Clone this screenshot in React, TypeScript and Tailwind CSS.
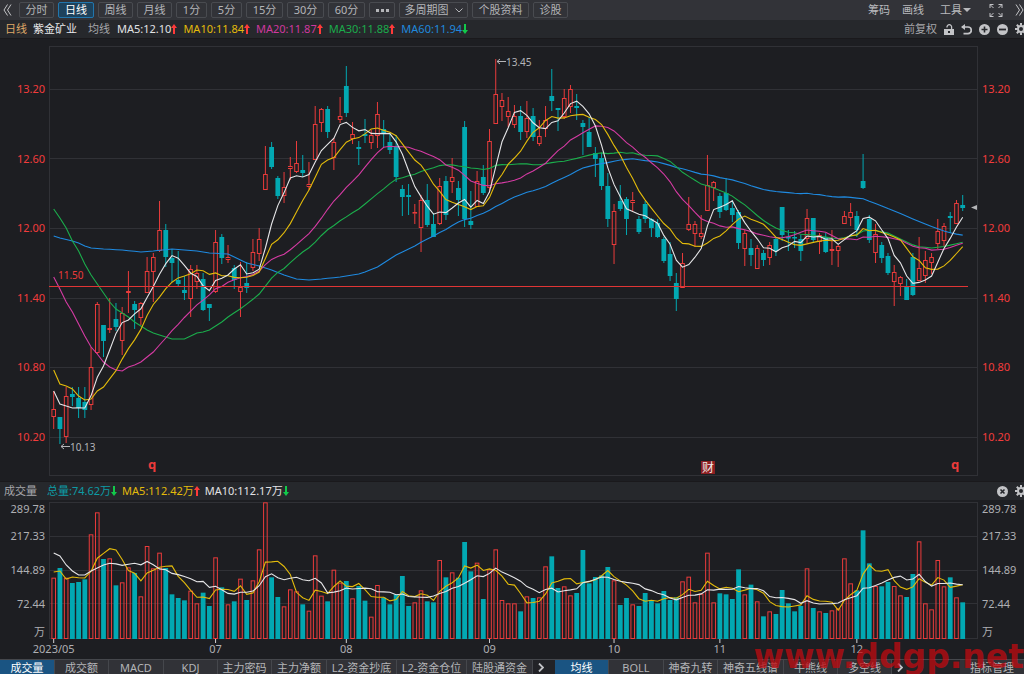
import React from "react";

const FONT = "font-['Noto_Sans','Noto_Sans_CJK_SC',sans-serif]";

// kind, high, open/close top, open/close bottom, low (all on the plot's y scale)
type Candle = [string, number, number, number, number];

const CANDLES: Candle[] = `
r 391 409 417 429;c 417 417 429 444;r 387 396 437 443;c 387 394 397 406;c 387 398 408 418;c 387 402 410 418;r 347 367 405 410;r 302 304 353 354;c 325 325 341 357;r 298 328 330 333;
c 303 319 327 331;r 307 313 341 355;r 271 291 293 313;c 301 304 310 329;r 302 303 318 325;r 257 271 293 293;r 253 257 272 302;r 201 230 251 252;c 224 230 257 267;c 249 258 263 282;
c 251 280 284 286;c 276 290 293 300;r 265 269 299 317;r 265 273 282 289;c 273 279 310 311;c 304 304 308 321;r 230 242 292 293;c 234 237 258 264;r 245 257 260 263;c 265 268 280 289;
r 262 287 292 317;c 262 283 288 293;r 239 252 268 271;r 228 239 254 261;r 146 174 190 190;c 142 147 167 169;c 176 178 196 199;r 172 187 196 203;r 157 166 169 180;r 141 163 172 173;
c 155 170 173 177;r 162 184 187 190;r 106 124 160 160;r 108 109 123 132;c 106 109 132 138;r 138 142 158 170;r 97 116 120 123;c 66 86 113 117;r 122 134 139 144;c 141 147 149 165;
c 119 134 136 143;r 130 135 143 149;r 102 114 136 148;c 120 129 133 147;c 132 142 150 154;c 135 146 177 182;c 185 189 197 216;c 184 195 197 215;r 204 212 213 224;r 195 200 228 252;
c 184 200 225 227;c 213 224 237 237;r 178 186 224 225;c 176 181 215 220;r 158 177 182 193;c 181 188 200 216;c 121 127 219 227;c 191 221 225 229;r 171 181 207 207;c 165 177 193 195;
r 129 141 188 193;r 59 94 124 124;r 93 100 107 121;r 97 111 117 127;r 105 116 125 128;c 106 116 132 140;r 101 118 132 138;c 108 116 137 141;r 120 136 144 146;r 106 120 129 137;
c 69 96 101 111;c 108 108 110 131;r 89 98 117 119;r 85 89 107 113;c 94 106 108 120;c 120 123 127 155;c 117 132 147 147;c 147 153 159 177;c 153 158 186 190;c 173 186 219 227;
r 204 211 245 264;c 185 201 209 211;c 197 199 219 235;r 192 200 203 212;c 216 219 232 234;c 201 204 219 223;c 218 219 228 237;c 219 223 237 238;c 237 239 261 263;c 242 254 276 281;
c 273 283 299 311;r 253 263 288 288;r 197 224 230 231;r 221 224 234 247;r 215 233 237 239;r 155 185 211 211;r 181 182 188 201;c 193 196 212 218;c 178 193 210 211;c 200 208 215 222;
c 210 212 243 249;r 230 233 249 266;c 239 248 255 266;r 245 248 269 269;c 250 253 260 266;r 242 245 258 265;c 237 239 251 256;c 207 207 235 241;c 230 237 238 251;c 231 237 238 248;
c 235 239 251 261;r 209 218 239 243;c 218 218 240 242;r 233 235 242 254;c 233 237 252 253;r 230 249 251 265;r 245 246 251 267;r 211 216 224 224;r 203 212 218 226;c 211 216 230 237;
c 154 181 188 189;c 215 219 240 243;r 224 234 253 263;c 242 245 258 263;c 253 256 273 275;r 265 272 282 306;r 276 277 284 296;c 279 287 300 300;c 253 257 295 296;r 237 268 281 281;
r 251 260 276 283;r 253 257 263 274;r 219 231 244 249;r 223 226 241 246;c 212 216 218 233;r 200 203 224 224;c 195 205 208 211`
  .split(";")
  .map((s) => {
    const p = s.trim().split(" ");
    return [p[0], +p[1], +p[2], +p[3], +p[4]];
  });

// bar tops, in thirds of a unit below y = 480
const VOLUMES = (
  "293 264 293 309 306 298 163 97 237 235 316 307 262 279 349 198 265 218 264 343 354 361 332 370 338 378 232 322 373 364 " +
  "296 360 301 208 67 292 351 379 328 334 373 392 226 347 364 269 308 303 355 318 362 410 315 353 373 343 288 378 367 331 " +
  "364 367 240 292 277 293 186 274 248 357 268 208 360 370 370 394 349 354 352 259 229 324 319 346 339 210 310 291 286 261 " +
  "301 375 354 373 378 339 360 370 333 360 352 304 290 367 341 218 367 340 343 357 268 343 314 364 409 394 402 330 370 394 " +
  "378 265 384 394 399 391 385 235 310 331 151 250 318 319 306 318 346 351 282 184 370 388 240 319 292 352 367"
)
  .split(" ")
  .map((v) => 480 + Number(v) / 3);

const CLOSES = CANDLES.map((c) => (c[0] === "r" ? c[2] : c[3]));
const xAt = (i: number) => 53.7 + i * 6.226;

type Key = [number, number];

// The first points of an average come from days before the visible range.
function average(values: number[], period: number, lead: Key[]): string {
  return values
    .map((_, i) => {
      let y: number;
      if (i >= period - 1) {
        y = values.slice(i - period + 1, i + 1).reduce((a, b) => a + b, 0) / period;
      } else {
        const k = Math.max(1, lead.findIndex((p) => p[0] >= i));
        const [a, b] = [lead[k - 1], lead[k]];
        y = a[1] + ((b[1] - a[1]) * (i - a[0])) / (b[0] - a[0]);
      }
      return `${xAt(i).toFixed(1)},${y.toFixed(1)}`;
    })
    .join(" ");
}

const seq = (...ys: number[]): Key[] => ys.map((y, i) => [i, y]);

const PRICE_LINES: [string, string][] = [
  ["#1f8ae0", average(CLOSES, 60, [[0, 236], [1, 238], [3, 241], [4, 243], [5, 246], [6, 248], [8, 249], [11, 250], [14, 252], [16, 251], [19, 249], [23, 251], [25, 253], [28, 254], [29, 257], [31, 263], [33, 266], [35, 270], [37, 275], [39, 279], [41, 280], [43, 279], [46, 277], [49, 274], [50, 272], [52, 267], [53, 263], [55, 255], [58, 246], [59, 243]])],
  ["#1bae4c", average(CLOSES, 30, seq(209, 218, 228, 241, 251, 264, 275, 284, 293, 302, 309, 313, 317, 322, 326, 330, 333, 335, 337, 339, 339, 339, 336, 333, 332, 330, 326, 322, 317, 312))],
  ["#d63ba4", average(CLOSES, 20, seq(277, 289, 302, 312, 324, 336, 347, 354, 362, 367, 370, 371, 367, 365, 362, 357, 352, 345, 338, 330))],
  ["#e3bb0b", average(CLOSES, 10, seq(370, 384, 386, 389, 396, 400, 399, 391, 387, 379))],
  ["#e6e6e8", average(CLOSES, 5, seq(391, 404, 406, 408, 408))],
];

const VOLUME_LINES: [string, string][] = [
  ["#e3bb0b", average(VOLUMES, 5, seq(572, 571, 579, 577, 578))],
  ["#e6e6e8", average(VOLUMES, 10, seq(553, 556, 565, 571, 575, 575, 571, 568, 565, 562))],
];

const MONTHS: [number, string][] = [[0, "2023/05"], [26, "07"], [47, "08"], [70, "09"], [90, "10"], [107, "11"], [129, "12"]];

const RED = "#ea3b3b";
const CYAN = "#02a8b2";
const GRID = "#303136";

function Arrow({ up }: { up: boolean }) {
  return (
    <svg width="6" height="10" viewBox="0 0 6 10" fill={up ? "#ff3a3a" : "#12c94a"} className="shrink-0">
      <path d={up ? "M3 0 6 4H4V10H2V4H0Z" : "M3 10 6 6H4V0H2V6H0Z"} />
    </svg>
  );
}

function Reading({ text, up, tone }: { text: string; up: boolean; tone: string }) {
  return (
    <span className={`flex items-center ${tone}`}>
      {text}
      <Arrow up={up} />
    </span>
  );
}

function Gear() {
  return (
    <svg width="12" height="12" viewBox="0 0 12 12" fill="none" stroke="currentColor">
      <circle cx="6" cy="6" r="3" strokeWidth="2" />
      <path d="M6 0V2.5M6 9.500V12M0 6H2.500M9.500 6H12M1.800 1.800 3.500 3.500M8.500 8.500 10.200 10.200M10.200 1.800 8.500 3.500M3.500 8.500 1.800 10.200" strokeWidth="2" />
    </svg>
  );
}

function IconButton({ label, children, className = "" }: { label: string; children: React.ReactNode; className?: string }) {
  return (
    <button aria-label={label} className={`flex shrink-0 items-center justify-center text-[#c3c4c7] ${className}`}>
      {children}
    </button>
  );
}

const PERIODS: [string, string][] = [
  ["分时", "w-[35px]"],
  ["日线", "w-[36px]"],
  ["周线", "w-[35px]"],
  ["月线", "w-[35px]"],
  ["1分", "w-[31px]"],
  ["5分", "w-[31px]"],
  ["15分", "w-[37px]"],
  ["30分", "w-[37px]"],
  ["60分", "w-[37px]"],
];

const BTN = "flex h-4 shrink-0 items-center justify-center rounded-xs border";
const IDLE = "border-[#494b50] text-[#b4b5b8]";

function Toolbar() {
  return (
    <div className="flex h-5 items-center bg-[#323338] text-[#b9babd]">
      <IconButton label="收起" className="w-[19px] pr-1">
        <svg width="9" height="12" viewBox="0 0 9 12" fill="none" stroke="currentColor">
          <path d="M4.500 .5 1 6l3.500 5.500M8 .5 4.500 6 8 11.500" />
        </svg>
      </IconButton>
      <nav className="flex gap-1">
        {PERIODS.map(([t, w]) => (
          <button key={t} className={`${BTN} ${w} ${t === "日线" ? "border-[#2176ad] bg-[#1d425c] text-white" : IDLE}`}>
            {t}
          </button>
        ))}
        <button aria-label="更多" className={`${BTN} w-[26px] gap-0.5 ${IDLE}`}>
          <i className="size-[3px] bg-[#b4b5b8]" />
          <i className="size-[3px] bg-[#b4b5b8]" />
          <i className="size-[3px] bg-[#b4b5b8]" />
        </button>
        <button className={`${BTN} w-[69px] gap-1.5 ${IDLE}`}>
          多周期图
          <svg width="8" height="5" viewBox="0 0 8 5" fill="none" stroke="currentColor">
            <path d="M.5 .5 4 4 7.500 .5" />
          </svg>
        </button>
        <button className={`${BTN} w-[57px] ${IDLE}`}>个股资料</button>
        <button className={`${BTN} w-[35px] ${IDLE}`}>诊股</button>
      </nav>
      <div className="ml-auto flex items-center">
        <button className="mr-3">筹码</button>
        <button className="mr-4">画线</button>
        <button className="mr-[18px] flex items-center gap-px">
          工具
          <svg width="8" height="4" viewBox="0 0 8 4" fill="currentColor">
            <path d="M0 0H8L4 4Z" />
          </svg>
        </button>
        <IconButton label="全屏" className="mr-3">
          <svg width="14" height="13" viewBox="0 0 14 13" fill="none" stroke="currentColor">
            <path d="M1 4V.5H4.500M1 .5 4.500 4M9.500 .5H13V4M13 .5 9.500 4M1 9V12.500H4.500M1 12.500 4.500 9M13 9V12.500H9.500M13 12.500 9.500 9" />
          </svg>
        </IconButton>
        <IconButton label="展开">
          <svg width="9" height="12" viewBox="0 0 9 12" fill="none" stroke="currentColor">
            <path d="M1 .5 4.500 6 1 11.500M4.500 .5 8 6 4.500 11.500" />
          </svg>
        </IconButton>
      </div>
    </div>
  );
}

function Legend() {
  return (
    <div className="flex h-[19px] items-center overflow-hidden border-b border-[#1a191c] bg-[#26282c] pl-[5px]">
      <span className="mr-1.5 text-[#dfa968]">日线</span>
      <span className="mr-[11px] text-[#e8e8ea]">紫金矿业</span>
      <span className="mr-[7px] text-[#a6a7ab]">均线</span>
      <div className="flex gap-1.5">
        <Reading text="MA5:12.10" up tone="text-[#e2e2e4]" />
        <Reading text="MA10:11.84" up tone="text-[#e3bb0b]" />
        <Reading text="MA20:11.87" up tone="text-[#cf389f]" />
        <Reading text="MA30:11.88" up tone="text-[#1bab4b]" />
        <Reading text="MA60:11.94" up={false} tone="text-[#2088dc]" />
      </div>
      <div className="-mr-[3px] ml-auto flex items-center gap-[7px]">
        <button className="text-[#a6a7ab]">前复权</button>
        <IconButton label="锁定">
          <svg width="10" height="11" viewBox="0 0 10 11">
            <path d="M3 3.500V3a2.300 2.300 0 0 1 4.600 0V5" fill="none" stroke="currentColor" strokeWidth="1.300" />
            <path fill="currentColor" fillRule="evenodd" d="M0 5H10V11H0ZM4 7V9H6V7Z" />
          </svg>
        </IconButton>
        <IconButton label="撤销">
          <svg width="11" height="11" viewBox="0 0 11 11" fill="none" stroke="currentColor" strokeWidth="1.700">
            <path d="M1 3H7a3.300 3.300 0 0 1 0 6.600H2.500" />
            <path d="M0 3 4 0V6Z" fill="currentColor" stroke="none" />
          </svg>
        </IconButton>
        <IconButton label="放大">
          <svg width="11" height="11" viewBox="0 0 11 11">
            <circle cx="5.500" cy="5.500" r="5.500" fill="currentColor" />
            <path d="M2.500 5.500h6M5.500 2.500v6" stroke="#26282c" strokeWidth="1.600" />
          </svg>
        </IconButton>
        <IconButton label="缩小">
          <svg width="11" height="11" viewBox="0 0 11 11">
            <circle cx="5.500" cy="5.500" r="5.500" fill="currentColor" />
            <path d="M2 5.500h7" stroke="#26282c" strokeWidth="1.800" />
          </svg>
        </IconButton>
        <IconButton label="设置">
          <Gear />
        </IconButton>
      </div>
    </div>
  );
}

const PRICES = ["13.20", "12.60", "12.00", "11.40", "10.80", "10.20"];

function PriceAxis({ side }: { side: string }) {
  return (
    <div className={`flex shrink-0 flex-col justify-between pt-10 pb-[34px] leading-5 text-[#f23c3c] ${side}`}>
      {PRICES.map((p) => (
        <span key={p}>{p}</span>
      ))}
    </div>
  );
}

function PriceChart() {
  return (
    <section className="flex h-[442px] bg-[#1d1e22]">
      <PriceAxis side="w-[49px] pr-1 text-right" />
      <svg className="h-full min-w-0 flex-1" viewBox="49 39 929 442" preserveAspectRatio="none" fontSize="10">
        <g fill="none" stroke={GRID}>
          <rect x="49.5" y="46.5" width="928" height="429" />
          {[89.5, 158.5, 228.500, 298.500, 367.500, 437.500].map((y) => (
            <path key={y} d={`M49 ${y}H977`} />
          ))}
        </g>
        {CANDLES.map(([kind, hi, top, bottom, lo], i) => {
          const x = xAt(i);
          const h = Math.max(bottom - top, 1.5);
          return kind === "r" ? (
            <g key={i} stroke={RED} fill="none">
              <path d={`M${x} ${hi}V${top}M${x} ${top + h}V${lo}`} />
              <rect x={x - 1.8} y={top + 0.5} width="3.6" height={Math.max(h - 1, 0.6)} />
            </g>
          ) : (
            <g key={i} fill={CYAN}>
              <path d={`M${x} ${hi}V${lo}`} stroke={CYAN} />
              <rect x={x - 2.4} y={top} width="4.8" height={h} />
            </g>
          );
        })}
        {PRICE_LINES.map(([color, points]) => (
          <polyline key={color} points={points} fill="none" stroke={color} strokeWidth="1.1" />
        ))}
        <path d="M49 286.500H968" stroke="#e03535" />
        <text x="58" y="279" fontSize="10" fill="#ec3b3b">11.50</text>
        <g stroke="#b4b5b8" fill="none">
          <path d="M497 61.500H506M500 59 497 61.500 500 64" />
          <path d="M61 446.500H70M64 444 61 446.500 64 449" />
        </g>
        <g fill="#b4b5b8">
          <text x="506" y="66">13.45</text>
          <text x="70" y="451">10.13</text>
          <path d="M971 207.500 977 205V210Z" />
        </g>
        <g fill="#ec3b3b" fontSize="13" fontWeight="700">
          <text x="148" y="469">q</text>
          <text x="951" y="469">q</text>
        </g>
        <rect x="701" y="461" width="14" height="13" fill="#8c1f22" />
        <text x="702" y="472" fontSize="12" fill="#f2e8e8">财</text>
      </svg>
      <PriceAxis side="w-[46px] pl-1" />
    </section>
  );
}

function VolumeAxis({ side }: { side: string }) {
  return (
    <div className={`flex shrink-0 flex-col pt-px text-[#aeafb3] ${side}`}>
      <span className="mb-0.5 h-4 leading-4">289.78</span>
      <span className="h-[34px] leading-[34px]">217.33</span>
      <span className="h-[34px] leading-[34px]">144.89</span>
      <span className="h-[34px] leading-[34px]">72.44</span>
      <span className="h-[22px] leading-[22px]">万</span>
    </div>
  );
}

function VolumeChart() {
  return (
    <section>
      <header className="flex h-[19px] items-center border-t border-[#1a191c] bg-[#26282c] pl-1 text-[#a6a7ab]">
        <h2 className="mr-2.5">成交量</h2>
        <div className="flex gap-[5px]">
          <Reading text="总量:74.62万" up={false} tone="text-[#0d9ba5]" />
          <Reading text="MA5:112.42万" up tone="text-[#e3bb0b]" />
          <Reading text="MA10:112.17万" up={false} tone="text-[#e2e2e4]" />
        </div>
        <div className="-mr-[3px] ml-auto flex items-center gap-[7px]">
          <IconButton label="关闭">
            <svg width="11" height="11" viewBox="0 0 11 11">
              <circle cx="5.500" cy="5.500" r="5.500" fill="currentColor" />
              <path d="M3.500 3.500l4 4M7.500 3.500l-4 4" stroke="#26282c" strokeWidth="1.600" />
            </svg>
          </IconButton>
          <IconButton label="指标设置">
            <Gear />
          </IconButton>
        </div>
      </header>
      <div className="flex h-[159px] bg-[#1d1e22]">
        <VolumeAxis side="w-[49px] pr-1 text-right" />
        <svg className="h-full min-w-0 flex-1 overflow-visible" viewBox="49 500 929 159" preserveAspectRatio="none" fontSize="11">
          <g fill="none" stroke={GRID}>
            <rect x="49.500" y="502.500" width="928" height="136" />
            {[536.5, 570.5, 603.5].map((y) => (
              <path key={y} d={`M49 ${y}H977`} />
            ))}
          </g>
          {VOLUMES.map((y, i) =>
            CANDLES[i][0] === "r" ? (
              <rect key={i} x={xAt(i) - 1.8} y={y + 0.5} width="3.6" height={638 - y} fill="none" stroke={RED} />
            ) : (
              <rect key={i} x={xAt(i) - 2.4} y={y} width="4.8" height={639 - y} fill={CYAN} />
            ),
          )}
          {VOLUME_LINES.map(([color, points]) => (
            <polyline key={color} points={points} fill="none" stroke={color} strokeWidth="1.1" />
          ))}
          {MONTHS.map(([i, label]) => (
            <g key={label}>
              <path d={`M${xAt(i)} 639V643`} stroke="#d0d0d2" />
              <text x={xAt(i)} y="653" textAnchor="middle" fill="#aeafb3">
                {label}
              </text>
            </g>
          ))}
        </svg>
        <VolumeAxis side="w-[46px] pl-1" />
      </div>
    </section>
  );
}

type Tab = [string, string];

const VOLUME_TABS: Tab[] = [
  ["成交量", "w-[55px]"],
  ["成交额", "w-[54px]"],
  ["MACD", "w-[55px]"],
  ["KDJ", "w-[54px]"],
  ["主力密码", "w-[54px]"],
  ["主力净额", "w-[55px]"],
  ["L2-资金抄底", "w-[70px]"],
  ["L2-资金仓位", "w-[70px]"],
  ["陆股通资金", "w-[66px]"],
];

const PRICE_TABS: Tab[] = [
  ["均线", "w-[54px]"],
  ["BOLL", "w-[55px]"],
  ["神奇九转", "w-[54px]"],
  ["神奇五线谱", "w-[66px]"],
  ["牛熊线", "w-[54px]"],
  ["多空线", "w-[54px]"],
];

function Tabs({ items, active }: { items: Tab[]; active: string }) {
  return (
    <>
      {items.map(([t, w]) => (
        <button
          key={t}
          className={`shrink-0 border-r border-[#45474c] whitespace-nowrap ${w} ${t === active ? "bg-[#1a5482] text-white" : "bg-[#313237] text-[#b4b5b8]"}`}
        >
          {t}
        </button>
      ))}
      <IconButton label="更多指标" className="w-4">
        <svg width="6" height="9" viewBox="0 0 6 9" fill="none" stroke="currentColor" strokeWidth="1.800">
          <path d="M1 .5 5 4.500 1 8.500" />
        </svg>
      </IconButton>
    </>
  );
}

export default function App() {
  return (
    <main className={`relative overflow-hidden bg-[#1d1e22] text-[11px] leading-4 ${FONT}`}>
      <Toolbar />
      <Legend />
      <PriceChart />
      <VolumeChart />
      <footer className="flex h-[15px] border-t border-[#45474c] bg-[#222327]">
        <Tabs items={VOLUME_TABS} active="成交量" />
        <span className="w-1.5" />
        <Tabs items={PRICE_TABS} active="均线" />
        <button className="ml-auto w-16 bg-[#313237] whitespace-nowrap text-[#b4b5b8]">指标管理</button>
      </footer>
      <div className="pointer-events-none absolute right-0 bottom-0 font-['DejaVu_Sans',sans-serif] text-[33px] leading-[34px] font-bold text-[#c00a10]/75">
        www.ddgp.net
      </div>
    </main>
  );
}
